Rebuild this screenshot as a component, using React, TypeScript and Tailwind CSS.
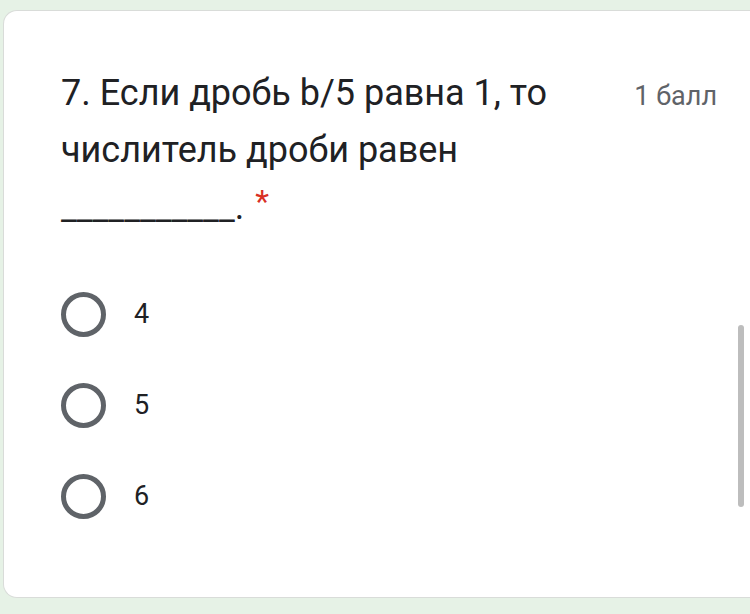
import React from 'react';

const options = ['4', '5', '6'];

function App() {
  return (
    <div
      className="w-[750px] h-[614px] overflow-hidden bg-[#e6f2e6] pt-[10px] pl-[3px]"
      style={{ fontFamily: 'Roboto, "Noto Sans", sans-serif' }}
    >
      <div className="relative h-[588px] bg-white rounded-l-[14px] border border-r-0 border-[#d9dcd9] pl-[57px] pr-[33px] pt-[54px]">
        {/* Header */}
        <div className="flex justify-between">
          <div className="w-[540px] text-[36px] leading-[57px] text-[#202124]">
            7. Если дробь b/5 равна 1, то числитель дроби равен{' '}
            <span className="text-[35px]">___________</span>.
            <span className="relative top-[-7px] text-[#d93025] ml-[11px] text-[32px]">*</span>
          </div>
          <div className="text-[27px] text-[#5f6368] leading-[55px] pt-[4px]">1 балл</div>
        </div>

        {/* Options */}
        <div className="mt-[55px] flex flex-col gap-[46px]">
          {options.map((o) => (
            <div key={o} className="flex items-center">
              <div className="w-[45px] h-[45px] rounded-full border-[5px] border-[#5f6368]" />
              <span className="ml-[28px] text-[27px] text-[#202124]">{o}</span>
            </div>
          ))}
        </div>

        {/* Scrollbar */}
        <div className="absolute right-[6px] top-[314px] w-[6px] h-[182px] rounded-full bg-[#bdbdbd]" />
      </div>
    </div>
  );
}

export default App;
